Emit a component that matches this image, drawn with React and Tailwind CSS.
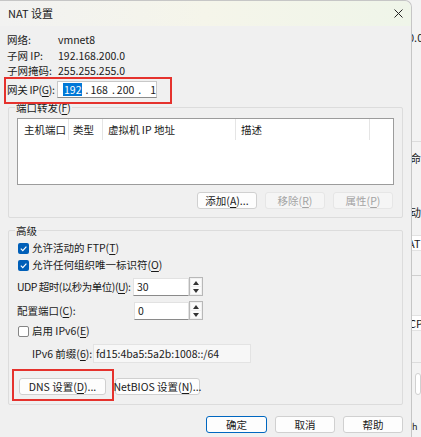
import React from 'react';

const Btn = ({ children, disabled, primary, className = '' }) => (
  <div
    className={`h-[17px] flex items-center justify-center rounded-[3px] border whitespace-nowrap ${
      disabled
        ? 'bg-[#f5f5f5] border-[#e6e6e6] text-[#a3a3a3]'
        : primary
        ? 'bg-[#fdfdfd] border-[#0067c0] text-[#1a1a1a]'
        : 'bg-[#fdfdfd] border-[#d0d0d0] text-[#1a1a1a]'
    } ${className}`}
  >
    {children}
  </div>
);

const Check = ({ checked }) =>
  checked ? (
    <div className="w-[11px] h-[11px] rounded-[2px] bg-[#005fb8] flex items-center justify-center">
      <svg width="9" height="9" viewBox="0 0 10 10">
        <path d="M2 5.2 L4.2 7.3 L8.2 2.8" fill="none" stroke="#fff" strokeWidth="1.3" />
      </svg>
    </div>
  ) : (
    <div className="w-[11px] h-[11px] rounded-[2px] bg-white border border-[#858585]" />
  );

const Spin = () => (
  <div className="w-[14px] h-[19px] shrink-0 border border-[#b8b8b8] bg-[#f0f0f0] flex flex-col p-[1px] gap-[1px]">
    <div className="flex-1 bg-[#fbfbfb] flex items-center justify-center">
      <svg width="6" height="4" viewBox="0 0 6 4"><path d="M3 0 L6 4 L0 4 Z" fill="#333" /></svg>
    </div>
    <div className="flex-1 bg-[#fbfbfb] flex items-center justify-center">
      <svg width="6" height="4" viewBox="0 0 6 4"><path d="M0 0 L6 0 L3 4 Z" fill="#333" /></svg>
    </div>
  </div>
);

const Group = ({ label, className = '', children }) => (
  <div className={`relative mx-[8px] border border-[#dcdcdc] rounded-[2px] ${className}`}>
    <span className="absolute -top-[8px] left-[6px] px-[1px] bg-[#f0f0f0] leading-[15px]">{label}</span>
    {children}
  </div>
);

const u = (s) => <span className="underline underline-offset-2">{s}</span>;

export default function App() {
  const info = [
    ['网络:', 'vmnet8'],
    ['子网 IP:', '192.168.200.0'],
    ['子网掩码:', '255.255.255.0'],
  ];

  return (
    <div className="w-[421px] h-[437px] flex overflow-hidden whitespace-nowrap bg-[#f3f3f3] text-[10.5px] text-[#1a1a1a] font-['Noto_Sans_CJK_SC','Noto_Sans',sans-serif]">
      {/* dialog */}
      <div className="relative w-[412px] h-full flex flex-col bg-[#f0f0f0] border-r border-t border-[#c6c6c6] rounded-tr-[7px] shrink-0">
        <div className="h-[25px] flex items-center justify-between pl-[8px] pr-[8px] rounded-tr-[7px] bg-gradient-to-r from-[#f2f2f1] via-[#f5f5ea] to-[#eff5e9]">
          <span className="text-[11px]">NAT 设置</span>
          <svg width="9" height="9" viewBox="0 0 9 9">
            <path d="M0.5 0.5 L8.5 8.5 M8.5 0.5 L0.5 8.5" stroke="#222" strokeWidth="1" />
          </svg>
        </div>

        <div className="pt-[6.5px] pl-[7px]">
          {info.map(([k, v]) => (
            <div key={k} className="flex items-center h-[15.5px]">
              <span className="w-[51px] shrink-0">{k}</span>
              <span>{v}</span>
            </div>
          ))}
          <div className="flex items-center h-[17px] mt-[2px]">
            <span className="w-[50px] shrink-0 tracking-[-0.3px]">网关 IP({u('G')}):</span>
            <div className="w-[100px] h-[17px] bg-white border border-[#c8c8c8] border-b-[#8a8a8a] flex items-center pl-[5px]">
              <span className="bg-[#0078d7] text-white px-[1px] leading-[13px]">192</span>
              <span className="ml-[3px]">.</span>
              <span className="ml-[2px]">168</span>
              <span className="ml-[4px]">.</span>
              <span className="ml-[2px]">200</span>
              <span className="ml-[4px]">.</span>
              <span className="ml-[9px]">1</span>
            </div>
          </div>
        </div>

        <Group label={<>端口转发({u('F')})</>} className="mt-[9px] pt-[10px] pl-[8px] pr-[8px] pb-[8px]">
          <div className="h-[67px] bg-white border border-[#9c9c9c]">
            <div className="flex h-[21px] items-center">
              <div className="w-[51px] pl-[6px] border-r border-[#e5e5e5] h-full flex items-center">主机端口</div>
              <div className="w-[34px] pl-[4px] border-r border-[#e5e5e5] h-full flex items-center">类型</div>
              <div className="w-[133px] pl-[5px] border-r border-[#e5e5e5] h-full flex items-center">虚拟机 IP 地址</div>
              <div className="w-[134px] pl-[5px] border-r border-[#e5e5e5] h-full flex items-center">描述</div>
            </div>
          </div>
          <div className="flex justify-end gap-[8px] mt-[7px] pr-[1px]">
            <Btn className="w-[60px]">添加({u('A')})...</Btn>
            <Btn disabled className="w-[60px]">移除({u('R')})</Btn>
            <Btn disabled className="w-[60px]">属性({u('P')})</Btn>
          </div>
        </Group>

        <Group label="高级" className="mt-[12px] pt-[9px] pl-[8px] pb-[9px]">
          <div className="flex items-center h-[16px] gap-[3px] pl-[1px]">
            <Check checked />
            <span>允许活动的 FTP({u('T')})</span>
          </div>
          <div className="flex items-center h-[16px] gap-[3px] pl-[1px] mt-[1px]">
            <Check checked />
            <span>允许任何组织唯一标识符({u('O')})</span>
          </div>
          <div className="flex items-center h-[19px] mt-[4px]">
            <span className="w-[116px] shrink-0 tracking-[-0.5px]">UDP 超时(以秒为单位)({u('U')}):</span>
            <div className="w-[56px] h-[18px] shrink-0 bg-white border border-[#e2e2e2] border-b-[#8a8a8a] flex items-center pl-[3px]">30</div>
            <Spin />
          </div>
          <div className="flex items-center h-[19px] mt-[5px]">
            <span className="w-[117px] shrink-0">配置端口({u('C')}):</span>
            <div className="w-[55px] h-[18px] shrink-0 bg-white border border-[#e2e2e2] border-b-[#8a8a8a] flex items-center pl-[3px]">0</div>
            <Spin />
          </div>
          <div className="flex items-center h-[16px] gap-[3px] pl-[1px] mt-[3px]">
            <Check />
            <span>启用 IPv6({u('E')})</span>
          </div>
          <div className="flex items-center h-[19px] mt-[5px] pl-[15px]">
            <span className="w-[61px] shrink-0">IPv6 前缀({u('6')}):</span>
            <div className="w-[158px] h-[19px] bg-[#f7f7f7] border border-[#e3e3e3] flex items-center pl-[2px]">
              fd15:4ba5:5a2b:1008::/64
            </div>
          </div>
          <div className="flex items-center gap-[9px] mt-[15px] pl-[2px]">
            <Btn className="w-[87px]">DNS 设置({u('D')})...</Btn>
            <Btn className="w-[85px]">NetBIOS 设置({u('N')})...</Btn>
          </div>
        </Group>

        <div className="flex justify-end gap-[8px] mt-[11px] pr-[8px]">
          <Btn primary className="w-[61px]">确定</Btn>
          <Btn className="w-[60px]">取消</Btn>
          <Btn className="w-[60px]">帮助</Btn>
        </div>

        {/* annotation boxes */}
        <div className="absolute left-[4px] top-[76px] w-[168px] h-[27px] border-2 border-[#e5322d]" />
        <div className="absolute left-[12px] top-[368px] w-[102px] h-[32px] border-2 border-[#e5322d]" />
      </div>

      {/* window behind, barely visible */}
      <div className="flex-1 flex flex-col overflow-hidden text-[11px] leading-[14px]">
        <div className="h-[30px]" />
        <div className="-ml-[4px]">0.0</div>
        <div className="h-[97px]" />
        <div className="border-t border-[#dcdcdc] h-[10px]" />
        <div className="-ml-[2px]">命</div>
        <div className="h-[40px]" />
        <div className="-ml-[2px]">动</div>
        <div className="h-[16px]" />
        <div className="bg-white border-y border-[#e2e2e2] -ml-[4px]">AT</div>
        <div className="h-[24px]" />
        <div className="border-t border-[#cfcfcf] h-[40px]" />
        <div className="bg-white border-y border-[#e2e2e2] -ml-[3px]">CP</div>
        <div className="h-[32px] border-b border-[#dcdcdc]" />
        <div className="h-[10px]" />
        <div className="ml-[3px] h-[22px] bg-white border border-[#d0d0d0] rounded-[3px]" />
        <div className="h-[25px]" />
        <div className="text-[9px]">h</div>
      </div>
    </div>
  );
}
